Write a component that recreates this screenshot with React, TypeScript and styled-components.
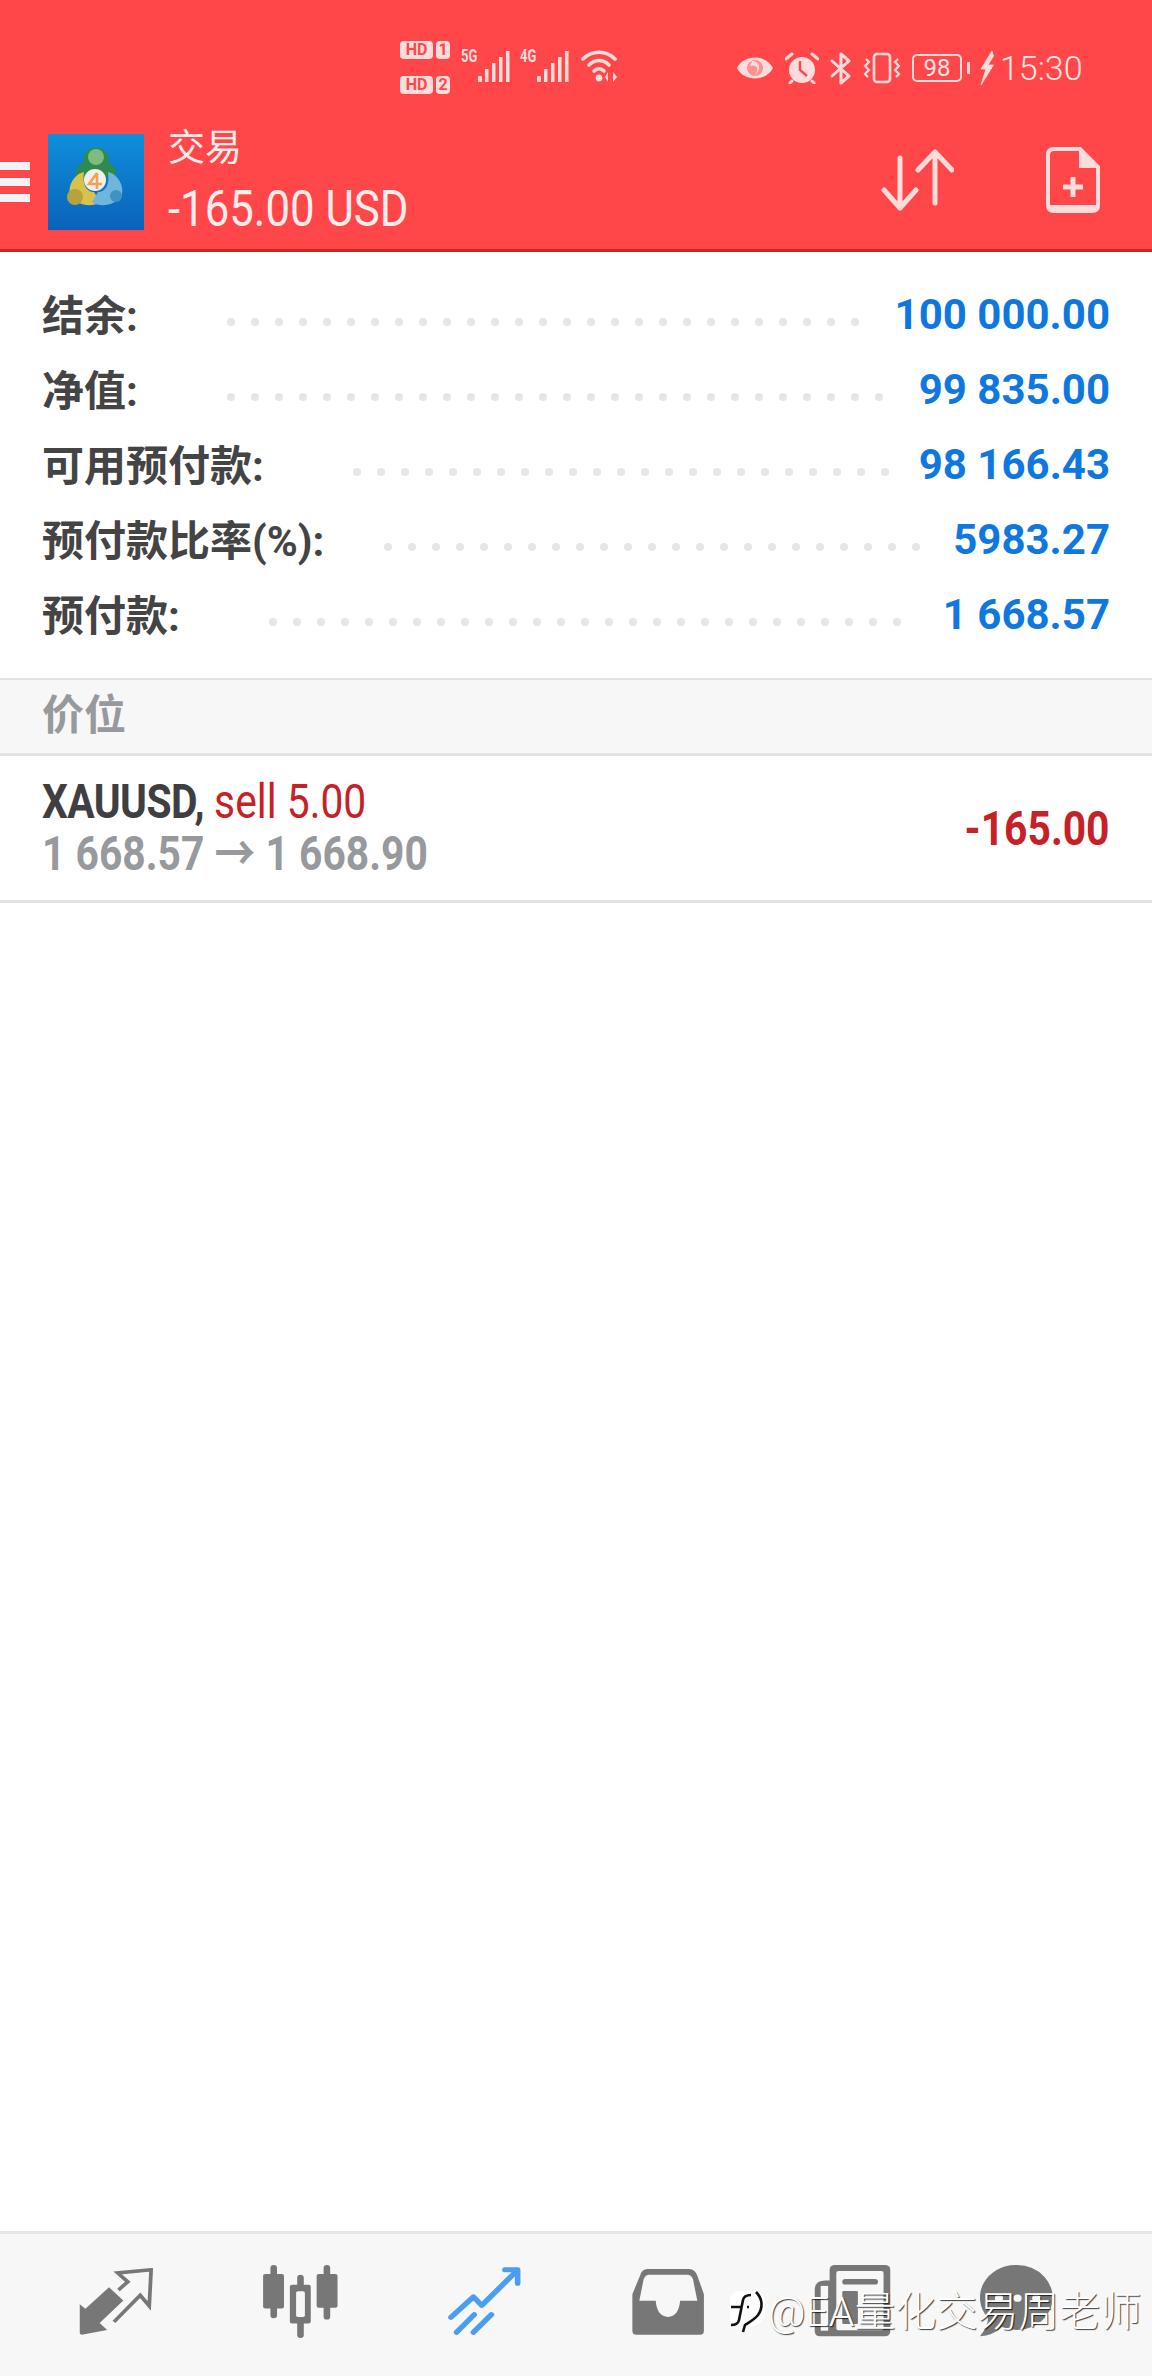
import React from 'react';
import styled, { createGlobalStyle } from 'styled-components';

const GlobalStyle = createGlobalStyle`
  html, body {
    margin: 0;
    padding: 0;
    background: #fff;
    font-family: Roboto, "Noto Sans CJK SC", sans-serif;
  }
`;

const Page = styled.div`
  position: relative;
  width: 1152px;
  height: 2376px;
  display: flex;
  flex-direction: column;
  overflow: hidden;
  background: #fff;
`;

const Header = styled.header`
  height: 252px;
  box-sizing: border-box;
  flex: none;
  background: #ff474a;
  border-bottom: 3px solid #c62828;
  color: #ffecec;
`;

const StatusBar = styled.div`
  height: 116px;
  box-sizing: border-box;
  padding: 0 68px 0 400px;
  display: flex;
  align-items: flex-start;
`;

const SimGroup = styled.div`
  display: grid;
  grid-template-columns: 33px 14px;
  gap: 17px 3px;
  margin-top: 41px;
  width: 61px;
`;

const HdBadge = styled.span`
  height: 18px;
  background: #ffdcdc;
  border-radius: 4px;
  color: #ff474a;
  font-size: 16px;
  line-height: 18px;
  font-weight: 700;
  text-align: center;
  overflow: hidden;
`;

const NetGroup = styled.div`
  position: relative;
  width: 50px;
  height: 34px;
  margin: 48px 9px 0 0;
`;

const NetLabel = styled.span`
  position: absolute;
  left: 0;
  top: 0;
  font-size: 18px;
  line-height: 16px;
  font-weight: 700;
  color: #ffdcdc;
  transform: scaleX(0.72);
  transform-origin: left;
`;

const StatusRight = styled.div`
  margin-left: auto;
  height: 136px;
  display: flex;
  align-items: center;
  gap: 11px;
`;

const Battery = styled.span`
  width: 50px;
  height: 28px;
  box-sizing: border-box;
  border: 2px solid #ffdcdc;
  border-radius: 5px;
  font-size: 24px;
  line-height: 24px;
  text-align: center;
  color: #ffe6e6;
  margin-right: -6px;
`;

const BatteryCap = styled.span`
  width: 3px;
  height: 12px;
  background: #ffdcdc;
  border-radius: 1px;
  margin-right: -3px;
`;

const Clock = styled.span`
  font-size: 34px;
  font-weight: 300;
  color: #ffe6e6;
  margin-left: -5px;
  width: 84px;
  white-space: nowrap;
`;

const Toolbar = styled.div`
  height: 132px;
  display: flex;
  align-items: center;
`;

const Burger = styled.div`
  width: 30px;
  height: 40px;
  margin-right: 18px;
  display: flex;
  flex-direction: column;
  justify-content: space-between;
`;

const BurgerBar = styled.span`
  height: 8px;
  background: #f6f1f4;
`;

const Titles = styled.div`
  margin-left: 24px;
  padding-top: 6px;
  display: flex;
  flex-direction: column;
`;

const Title = styled.div`
  font-size: 37px;
  line-height: 48px;
  margin-top: -6px;
`;

const Balance = styled.div`
  margin-top: 6px;
  font-size: 50px;
  line-height: 60px;
  transform: scaleX(0.875);
  transform-origin: left;
  white-space: nowrap;
`;

const Actions = styled.div`
  margin: -4px 0 0 auto;
  padding-right: 52px;
  display: flex;
  align-items: center;
  gap: 92px;
`;

const Icon = styled.svg<{ $w: number; $h: number }>`
  display: block;
  flex: none;
  width: ${(p) => p.$w}px;
  height: ${(p) => p.$h}px;
`;

const SignalIcon = styled(Icon)`
  position: absolute;
  right: 0;
  bottom: 0;
`;

const WifiIcon = styled(Icon)`
  margin: 50px 0 0 2px;
`;

const BoltIcon = styled(Icon)`
  margin-left: 2px;
`;

const Content = styled.main`
  flex: 1;
  display: flex;
  flex-direction: column;
`;

const Summary = styled.section`
  padding: 25px 42px 26px;
  border-bottom: 2px solid #e2e2e2;
`;

const SummaryRow = styled.div`
  height: 75px;
  display: flex;
  align-items: center;
`;

const Label = styled.span<{ $w: number }>`
  width: ${(p) => p.$w}px;
  flex: none;
  margin-top: -5px;
  font-size: 42px;
  font-weight: 700;
  color: #444;
  white-space: nowrap;
`;

const Leader = styled.div`
  display: flex;
  gap: 16px;
  margin-top: 14px;
`;

const Dot = styled.i`
  width: 8px;
  height: 8px;
  border-radius: 50%;
  background: #e6e6e6;
`;

const Value = styled.span`
  margin-left: auto;
  font-size: 42px;
  font-weight: 700;
  color: #0f78e0;
  white-space: nowrap;
`;

const SectionHead = styled.div`
  height: 76px;
  box-sizing: border-box;
  padding-left: 42px;
  background: #f7f7f7;
  border-bottom: 3px solid #e2e2e2;
  font-size: 42px;
  line-height: 72px;
  font-weight: 700;
  color: #98999c;
`;

const Position = styled.div`
  height: 147px;
  box-sizing: border-box;
  padding: 0 42px;
  border-bottom: 3px solid #e2e2e2;
  display: flex;
  align-items: center;
  justify-content: space-between;
`;

const PositionInfo = styled.div`
  font-size: 48px;
  line-height: 52px;
  transform: scaleX(0.85);
  transform-origin: left;
  white-space: nowrap;
`;

const Symbol = styled.span`
  font-weight: 700;
  letter-spacing: -0.7px;
  color: #3f3f41;
`;

const Side = styled.span`
  color: #c62127;
`;

const Prices = styled.div`
  font-weight: 700;
  color: #98999c;
`;

const Profit = styled.span`
  font-size: 48px;
  font-weight: 700;
  color: #c62127;
  transform: scaleX(0.85);
  transform-origin: right;
`;

const BottomNav = styled.nav`
  height: 145px;
  flex: none;
  box-sizing: border-box;
  padding: 0 0 8px 24px;
  background: #f7f7f7;
  border-top: 3px solid #e6e6e6;
  display: flex;
  align-items: center;
`;

const NavItem = styled.div`
  width: 184px;
  display: flex;
  justify-content: center;
`;

const ChatItem = styled(NavItem)`
  padding-right: 40px;
  box-sizing: border-box;
`;

const Watermark = styled.div`
  position: absolute;
  left: 730px;
  top: 2288px;
  display: flex;
  align-items: center;
  gap: 2px;
  color: #fff;
  font-size: 41px;
  line-height: 48px;
  font-weight: 300;
  white-space: nowrap;
  text-shadow: 1px 1px 1px rgba(0, 0, 0, 0.75);
`;

const rows = [
  { label: '结余:', width: 185, value: '100 000.00', dots: 27 },
  { label: '净值:', width: 185, value: '99 835.00', dots: 28 },
  { label: '可用预付款:', width: 311, value: '98 166.43', dots: 23 },
  { label: '预付款比率(%):', width: 342, value: '5983.27', dots: 23 },
  { label: '预付款:', width: 227, value: '1 668.57', dots: 27 },
];

const NAV = '#777';
const TINT = '#ffdcdc';

const Signal = () => (
  <SignalIcon $w={33} $h={31} viewBox="0 0 33 31">
    <g fill={TINT}>
      <rect x="0" y="25" width="4" height="6" rx="1" />
      <rect x="7" y="18" width="3.5" height="13" />
      <rect x="14" y="12" width="3.5" height="19" />
      <rect x="21" y="6" width="3.5" height="25" />
      <rect x="28" y="0" width="3.5" height="31" />
    </g>
  </SignalIcon>
);

const Wifi = () => (
  <WifiIcon $w={38} $h={32} viewBox="0 0 38 32">
    <g fill="none" stroke={TINT} strokeWidth="3.6" strokeLinecap="round">
      <path d="M2 9 C11 0 25 0 34 9" />
      <path d="M8 15 C14 9 22 9 28 15" />
      <path d="M13 21 C16 18 20 18 23 21" />
    </g>
    <circle cx="18" cy="28" r="3.4" fill={TINT} />
    <path d="M27 22 V32 L24 27 Z M32 32 V22 L36 27 Z" fill={TINT} />
  </WifiIcon>
);

const Eye = () => (
  <Icon $w={38} $h={24} viewBox="0 0 38 24">
    <path d="M1 12 C8 -2 30 -2 37 12 C30 26 8 26 1 12 Z" fill={TINT} />
    <circle cx="19" cy="12" r="8" fill="#ff8f90" />
    <path d="M16 5 C24 5 26 14 19 19 C24 12 20 8 14 10 Z" fill={TINT} />
  </Icon>
);

const Alarm = () => (
  <Icon $w={34} $h={32} viewBox="0 0 34 32">
    <circle cx="17" cy="18" r="13" fill={TINT} />
    <path d="M1 7 L7 2 M33 7 L27 2" stroke={TINT} strokeWidth="3" strokeLinecap="round" />
    <path d="M7 29 L5 31 M27 29 L29 31" stroke={TINT} strokeWidth="3" strokeLinecap="round" />
    <path d="M15 9 V18 L22 24" fill="none" stroke="#ff474a" strokeWidth="2.4" />
  </Icon>
);

const Bluetooth = () => (
  <Icon $w={22} $h={33} viewBox="0 0 22 33">
    <path
      d="M2 9 L19 24 L11 31 V2 L19 9 L2 24"
      fill="none"
      stroke={TINT}
      strokeWidth="3"
      strokeLinejoin="round"
      strokeLinecap="round"
    />
  </Icon>
);

const Vibrate = () => (
  <Icon $w={38} $h={32} viewBox="0 0 38 32">
    <rect x="11" y="2" width="16" height="28" rx="3" fill="none" stroke={TINT} strokeWidth="2.6" />
    <path
      d="M3 7 L6 10 L2 14 L6 18 L2 22 L5 25 M35 7 L32 10 L36 14 L32 18 L36 22 L33 25"
      fill="none"
      stroke={TINT}
      strokeWidth="2.2"
    />
  </Icon>
);

const Bolt = () => (
  <BoltIcon $w={14} $h={34} viewBox="0 0 14 34">
    <path d="M12 0 L1 18 H6 L1 34 L13.5 14 H8 L13.5 5 Z" fill={TINT} stroke={TINT} strokeWidth="0.8" />
  </BoltIcon>
);

const SwapArrows = () => (
  <Icon $w={73} $h={64} viewBox="0 0 73 64">
    <g fill="none" stroke={TINT} strokeWidth="5" strokeLinecap="round" strokeLinejoin="round">
      <path d="M19 10 V60 M3 42 L19 60 L35 42" />
      <path d="M54 55 V4 M37 22 L54 4 L71 22" />
    </g>
  </Icon>
);

const NewDoc = () => (
  <Icon $w={54} $h={66} viewBox="0 0 54 66">
    <path
      d="M8 2 H34 L52 20 V58 Q52 64 46 64 H8 Q2 64 2 58 V8 Q2 2 8 2 Z"
      fill="#ff474a"
      stroke={TINT}
      strokeWidth="4"
    />
    <path d="M33 2 V21 H52 Z" fill={TINT} />
    <path d="M27 30 V50 M17 40 H37" stroke={TINT} strokeWidth="5" />
    <path d="M4 58 H50 V62 H4 Z" fill={TINT} />
  </Icon>
);

const Mt4Logo = () => (
  <Icon $w={96} $h={96} viewBox="0 0 96 96">
    <defs>
      <linearGradient id="mtBg" x1="0" y1="0" x2="0" y2="1">
        <stop offset="0" stopColor="#0e8fdc" />
        <stop offset="1" stopColor="#0a62b8" />
      </linearGradient>
    </defs>
    <rect width="96" height="96" fill="url(#mtBg)" />
    <path
      d="M48 14 C58 14 62 22 60 28 C68 32 70 40 66 46 L56 42 C52 36 44 36 40 42 L30 46 C26 40 28 32 36 28 C34 22 38 14 48 14 Z"
      fill="#2f8a4e"
    />
    <circle cx="48" cy="23" r="8" fill="#7dbb80" />
    <path d="M36 38 C26 40 20 52 22 60 C28 72 44 74 52 68 L46 58 C38 58 34 50 36 38 Z" fill="#d9c24a" />
    <circle cx="27" cy="63" r="8" fill="#b9a23a" />
    <path d="M60 38 C70 40 76 52 74 60 C68 72 52 74 44 68 L50 58 C58 58 62 50 60 38 Z" fill="#6fb6dc" />
    <circle cx="68" cy="62" r="6" fill="#3f93c4" />
    <circle cx="47" cy="46" r="11" fill="#f4efe6" />
    <path d="M49 39 L41 50 H54 M49 39 V55" fill="none" stroke="#eba45a" strokeWidth="2.6" />
  </Icon>
);

const TradeArrows = () => (
  <Icon $w={74} $h={67} viewBox="215 183 197 189" preserveAspectRatio="none">
    <path d="M217 285 L232 298 L295 237 L333 275 L270 338 L290 358 L222 371 Q217 371 217 365 Z" fill={NAV} />
    <path
      d="M308 335 L378 260 L402 290 L407 188 L318 197 L345 222 L320 245"
      fill="none"
      stroke={NAV}
      strokeWidth="10"
    />
  </Icon>
);

const Candles = () => (
  <Icon $w={77} $h={73} viewBox="705 165 210 222" preserveAspectRatio="none">
    <g stroke={NAV} strokeWidth="18" strokeLinecap="round">
      <path d="M737 174 V318 M882 174 V322 M810 204 V378" />
    </g>
    <rect x="708" y="192" width="57" height="105" rx="6" fill={NAV} />
    <rect x="854" y="192" width="57" height="103" rx="6" fill={NAV} />
    <rect x="781" y="225" width="57" height="118" rx="6" fill={NAV} />
    <rect x="798" y="245" width="24" height="78" rx="5" fill="#f7f7f7" />
  </Icon>
);

const Trend = () => (
  <Icon $w={73} $h={68} viewBox="1210 172 195 200" preserveAspectRatio="none">
    <g fill="none" stroke="#4a9df0" strokeWidth="15" strokeLinecap="round" strokeLinejoin="round">
      <path d="M1218 320 L1278 260 L1300 285 L1392 185" />
      <path d="M1362 180 H1396 V220" />
      <path d="M1233 364 L1280 312 M1278 364 L1326 312" />
    </g>
  </Icon>
);

const Inbox = () => (
  <Icon $w={73} $h={67} viewBox="143 172 200 200" preserveAspectRatio="none">
    <path
      d="M185 175 H300 Q315 175 322 195 L340 250 V360 Q340 371 330 371 H155 Q144 371 144 360 V250 L165 195 Q170 175 185 175 Z"
      fill={NAV}
    />
    <path
      d="M190 192 H295 Q305 192 310 205 L322 270 H275 Q270 318 242 318 Q212 318 208 270 H163 L175 205 Q180 192 190 192 Z"
      fill="#f7f7f7"
    />
  </Icon>
);

const News = () => (
  <Icon $w={77} $h={72} viewBox="648 165 207 217" preserveAspectRatio="none">
    <rect x="690" y="165" width="163" height="215" rx="14" fill={NAV} />
    <path d="M678 212 Q650 212 650 240 V365 Q650 380 665 380 H700 V212 Z" fill={NAV} />
    <rect x="666" y="228" width="20" height="135" fill="#f7f7f7" />
    <rect x="708" y="183" width="127" height="179" rx="6" fill="#f7f7f7" />
    <rect x="724" y="207" width="96" height="17" rx="8" fill={NAV} />
    <rect x="724" y="243" width="42" height="100" rx="4" fill={NAV} />
  </Icon>
);

const Chat = () => (
  <Icon $w={73} $h={72} viewBox="1100 165 200 217" preserveAspectRatio="none">
    <path d="M1200 165 A98 98 0 1 1 1160 352 Q1135 378 1100 380 Q1122 350 1122 325 A98 98 0 0 1 1200 165 Z" fill={NAV} />
    <circle cx="1152" cy="265" r="11" fill="#f7f7f7" />
    <circle cx="1203" cy="265" r="11" fill="#f7f7f7" />
    <circle cx="1254" cy="265" r="11" fill="#f7f7f7" />
  </Icon>
);

const WatermarkLogo = () => (
  <Icon $w={36} $h={44} viewBox="0 0 36 44">
    <path d="M12 1 H25 Q35 1 35 12 V22 Q35 34 20 37 L13 43 L10 37 Q0 34 0 24 V12 Q0 1 12 1 Z" fill="#fff" />
    <path d="M21 5 Q14 5 13 10 L9 30 Q8 35 1 35 M1 17 H11 M17 17 H19" fill="none" stroke="#111" strokeWidth="2.6" />
    <path d="M26 2 C33 9 33 18 28 25 C24 30 18 33 15 35 L13 42" fill="none" stroke="#111" strokeWidth="2.6" />
  </Icon>
);

const App: React.FC = () => (
  <Page>
    <GlobalStyle />
    <Header>
      <StatusBar>
        <SimGroup>
          <HdBadge>HD</HdBadge>
          <HdBadge>1</HdBadge>
          <HdBadge>HD</HdBadge>
          <HdBadge>2</HdBadge>
        </SimGroup>
        <NetGroup>
          <NetLabel>5G</NetLabel>
          <Signal />
        </NetGroup>
        <NetGroup>
          <NetLabel>4G</NetLabel>
          <Signal />
        </NetGroup>
        <Wifi />
        <StatusRight>
          <Eye />
          <Alarm />
          <Bluetooth />
          <Vibrate />
          <Battery>98</Battery>
          <BatteryCap />
          <Bolt />
          <Clock>15:30</Clock>
        </StatusRight>
      </StatusBar>
      <Toolbar>
        <Burger>
          <BurgerBar />
          <BurgerBar />
          <BurgerBar />
        </Burger>
        <Mt4Logo />
        <Titles>
          <Title>交易</Title>
          <Balance>-165.00 USD</Balance>
        </Titles>
        <Actions>
          <SwapArrows />
          <NewDoc />
        </Actions>
      </Toolbar>
    </Header>
    <Content>
      <Summary>
        {rows.map((row) => (
          <SummaryRow key={row.label}>
            <Label $w={row.width}>{row.label}</Label>
            <Leader>
              {Array.from({ length: row.dots }, (_, i) => (
                <Dot key={i} />
              ))}
            </Leader>
            <Value>{row.value}</Value>
          </SummaryRow>
        ))}
      </Summary>
      <SectionHead>价位</SectionHead>
      <Position>
        <PositionInfo>
          <div>
            <Symbol>XAUUSD,</Symbol> <Side>sell 5.00</Side>
          </div>
          <Prices>1 668.57 → 1 668.90</Prices>
        </PositionInfo>
        <Profit>-165.00</Profit>
      </Position>
    </Content>
    <BottomNav>
      <NavItem>
        <TradeArrows />
      </NavItem>
      <NavItem>
        <Candles />
      </NavItem>
      <NavItem>
        <Trend />
      </NavItem>
      <NavItem>
        <Inbox />
      </NavItem>
      <NavItem>
        <News />
      </NavItem>
      <ChatItem>
        <Chat />
      </ChatItem>
    </BottomNav>
    <Watermark>
      <WatermarkLogo />
      <span>@EA量化交易周老师</span>
    </Watermark>
  </Page>
);

export default App;
